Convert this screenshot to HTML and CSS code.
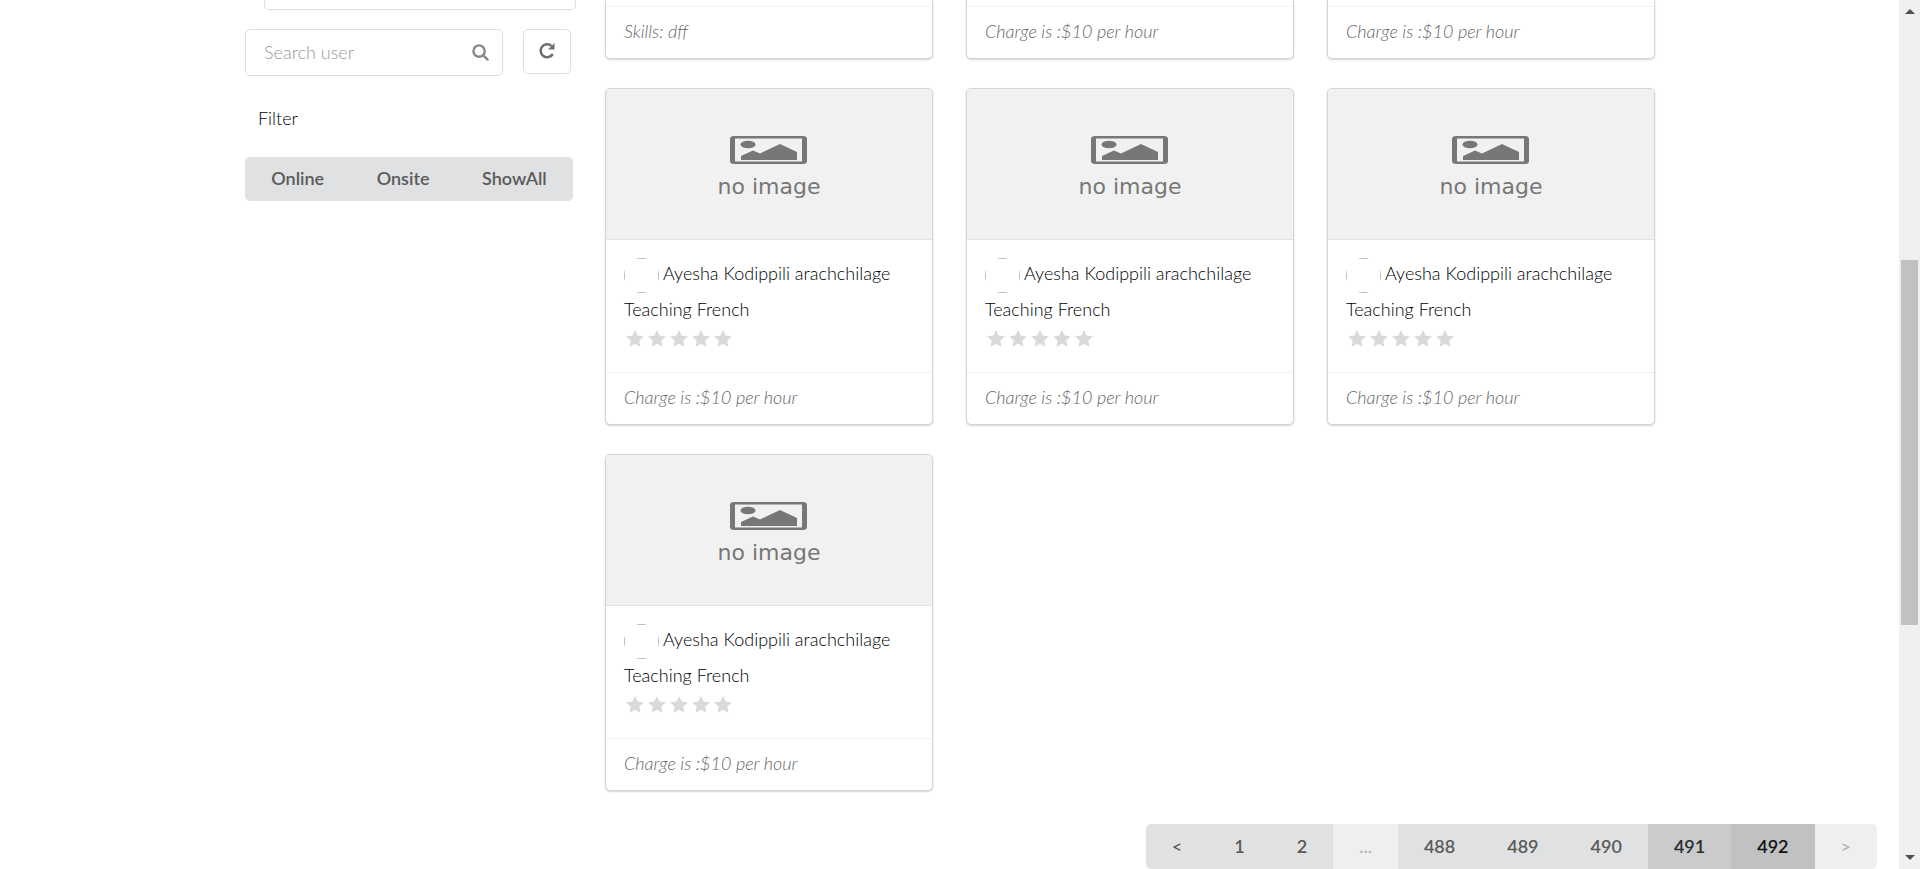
FILE: index.html
```html
<!DOCTYPE html>
<html lang="en">
<head>
<meta charset="utf-8">
<title>Users</title>
<link rel="stylesheet" href="styles.css">
</head>
<body>
<svg class="sprite" aria-hidden="true">
  <symbol id="star" viewBox="0 0 18 17"><path d="M9 0l2.600 5.600 6.200.8-4.500 4.200 1.100 6.100L9 13.700l-5.400 3 1.100-6.100L.2 6.400l6.200-.8z"/></symbol>
  <symbol id="picture" viewBox="0 0 78 28"><path fill-rule="evenodd" d="M4 0h69q4 0 4 3v22q0 3-4 3H4q-4 0-4-3V3q0-3 4-3zm1 2.500v23h67v-23z"/><ellipse cx="18" cy="8.500" rx="7.500" ry="3.800"/><path d="M11 24v-4l12-5.500 7 3L50 8l17 8v8z"/></symbol>
</svg>
<div class="window">
  <div class="page">
    <div class="container">
      <aside class="sidebar">
        <div class="panel"></div>
        <form class="search">
          <div class="search-box">
            <input class="search-input" type="text" placeholder="Search user" aria-label="Search user">
            <svg class="search-icon" viewBox="0 0 18 18" aria-hidden="true"><circle cx="7.500" cy="7.500" r="6"/><path d="M12 12l4.500 4.500"/></svg>
          </div>
          <button class="refresh" type="button" aria-label="Refresh"><svg class="refresh-icon" viewBox="0 0 18 18" aria-hidden="true"><path class="arc" d="M13.500 3.900A6.500 6.500 0 1 0 14.800 12"/><path class="head" d="M16.500 1v6.500H10z"/></svg></button>
        </form>
        <h2 class="filter-title">Filter</h2>
        <div class="filters">
          <button class="filter" type="button">Online</button>
          <button class="filter" type="button">Onsite</button>
          <button class="filter" type="button">ShowAll</button>
        </div>
      </aside>
      <main class="cards">
        <article class="card card-end"><p class="extra">Skills: dff</p></article>
        <article class="card card-end"><p class="extra">Charge is :$10 per hour</p></article>
        <article class="card card-end"><p class="extra">Charge is :$10 per hour</p></article>

        <article class="card">
          <div class="cover"><svg class="picture" aria-hidden="true"><use href="#picture"/></svg><span class="cover-text">no image</span></div>
          <div class="content">
            <div class="person"><span class="avatar"></span><span>Ayesha Kodippili arachchilage</span></div>
            <p class="subject">Teaching French</p>
            <div class="stars" role="img" aria-label="0 of 5 stars"><svg><use href="#star"/></svg><svg><use href="#star"/></svg><svg><use href="#star"/></svg><svg><use href="#star"/></svg><svg><use href="#star"/></svg></div>
          </div>
          <p class="extra">Charge is :$10 per hour</p>
        </article>
        <article class="card">
          <div class="cover"><svg class="picture" aria-hidden="true"><use href="#picture"/></svg><span class="cover-text">no image</span></div>
          <div class="content">
            <div class="person"><span class="avatar"></span><span>Ayesha Kodippili arachchilage</span></div>
            <p class="subject">Teaching French</p>
            <div class="stars" role="img" aria-label="0 of 5 stars"><svg><use href="#star"/></svg><svg><use href="#star"/></svg><svg><use href="#star"/></svg><svg><use href="#star"/></svg><svg><use href="#star"/></svg></div>
          </div>
          <p class="extra">Charge is :$10 per hour</p>
        </article>
        <article class="card">
          <div class="cover"><svg class="picture" aria-hidden="true"><use href="#picture"/></svg><span class="cover-text">no image</span></div>
          <div class="content">
            <div class="person"><span class="avatar"></span><span>Ayesha Kodippili arachchilage</span></div>
            <p class="subject">Teaching French</p>
            <div class="stars" role="img" aria-label="0 of 5 stars"><svg><use href="#star"/></svg><svg><use href="#star"/></svg><svg><use href="#star"/></svg><svg><use href="#star"/></svg><svg><use href="#star"/></svg></div>
          </div>
          <p class="extra">Charge is :$10 per hour</p>
        </article>
        <article class="card">
          <div class="cover"><svg class="picture" aria-hidden="true"><use href="#picture"/></svg><span class="cover-text">no image</span></div>
          <div class="content">
            <div class="person"><span class="avatar"></span><span>Ayesha Kodippili arachchilage</span></div>
            <p class="subject">Teaching French</p>
            <div class="stars" role="img" aria-label="0 of 5 stars"><svg><use href="#star"/></svg><svg><use href="#star"/></svg><svg><use href="#star"/></svg><svg><use href="#star"/></svg><svg><use href="#star"/></svg></div>
          </div>
          <p class="extra">Charge is :$10 per hour</p>
        </article>
      </main>
    </div>
    <nav class="pagination" aria-label="Pages">
      <button class="page-item" type="button">&lt;</button>
      <button class="page-item" type="button">1</button>
      <button class="page-item" type="button">2</button>
      <button class="page-item disabled" type="button" disabled>...</button>
      <button class="page-item" type="button">488</button>
      <button class="page-item" type="button">489</button>
      <button class="page-item" type="button">490</button>
      <button class="page-item hovered" type="button">491</button>
      <button class="page-item current" type="button" aria-current="page">492</button>
      <button class="page-item disabled" type="button" disabled>&gt;</button>
    </nav>
  </div>
  <div class="scrollbar" aria-hidden="true">
    <svg class="scroll-arrow" viewBox="0 0 10 5"><path d="M0 5l5-5 5 5z"/></svg>
    <div class="track"><div class="thumb"></div></div>
    <svg class="scroll-arrow" viewBox="0 0 10 5"><path d="M0 0l5 5 5-5z"/></svg>
  </div>
</div>
</body>
</html>
```

FILE: styles.css
```css
*, *::before { box-sizing: border-box; }

body {
  margin: 0;
  background: #fff;
  color: #000;
  font: 300 18px/24px Lato, "Liberation Sans", sans-serif;
}

button, input { font: inherit; }
p, h2 { margin: 0; }
.sprite { position: absolute; width: 0; height: 0; }

.window { display: flex; min-height: 100vh; }
.page { flex: 1; min-width: 0; }

.container {
  display: grid;
  grid-template-columns: repeat(4, 1fr);
  column-gap: 33px;
  max-width: 1411px;
  margin: 0 auto;
}

/* Sidebar */
.sidebar { padding-left: 1px; margin-right: -1px; }
.panel {
  height: 10px;
  margin: 0 -3px 19px 19px;
  border: 1px solid #dededf;
  border-top: 0;
  border-radius: 0 0 5px 5px;
}
.search { display: flex; gap: 20px; align-items: flex-start; padding-right: 2px; }
.search-box { position: relative; flex: 1; }
.search-input {
  display: block;
  width: 100%;
  height: 47px;
  padding: 0 48px 2px 18px;
  border: 1px solid #dededf;
  border-radius: 5px;
  color: #212121;
  background: #fff;
}
.search-input::placeholder { color: #999; opacity: 1; }
.search-icon {
  position: absolute;
  top: 15px;
  right: 14px;
  width: 17px;
  height: 17px;
  fill: none;
  stroke: #888;
  stroke-width: 2.500;
  stroke-linecap: round;
}
.refresh {
  display: grid;
  place-items: center;
  width: 48px;
  height: 45px;
  padding: 0 0 2px;
  border: 1px solid #dededf;
  border-radius: 5px;
  background: #fff;
}
.refresh-icon { width: 18px; height: 18px; }
.arc { fill: none; stroke: #6e6e6e; stroke-width: 2.500; }
.head { fill: #6e6e6e; }
.filter-title { margin: 30px 13px 27px; font-size: 18px; font-weight: inherit; }
.filters { display: flex; border-radius: 5px; overflow: hidden; background: #e0e1e2; }
.filter {
  flex: 1 1 auto;
  height: 44px;
  padding: 0 18px 2px;
  border: 0;
  background: none;
  color: #5a5a5a;
  font-weight: 600;
}

/* Cards */
.cards {
  grid-column: 2 / -1;
  display: grid;
  grid-template-columns: repeat(3, 1fr);
  gap: 29px 33px;
}
.card {
  border: 1px solid #d4d4d5;
  border-radius: 5px;
  box-shadow: 0 1px 2px #d4d4d5;
  overflow: hidden;
  background: #fff;
}
.card-end { padding-top: 6px; border-top: 0; border-radius: 0 0 5px 5px; }
.cover {
  display: flex;
  flex-direction: column;
  align-items: center;
  gap: 10px;
  height: 151px;
  padding-top: 47px;
  border-bottom: 1px solid #e2e2e2;
  background: #f1f1f1;
}
.picture { width: 78px; height: 28px; fill: #777; }
.cover-text { color: #777; font: 22px/26px "DejaVu Sans", sans-serif; }
.content { padding: 18px 18px 24px; }
.person { display: flex; gap: 4px; height: 39px; }
.person span:last-child { padding-top: 3px; }
.avatar { width: 35px; height: 35px; border-radius: 50%; overflow: hidden; }
.avatar::before { content: ""; display: block; height: 100%; border: 1px solid #b8b8b8; }
.subject { margin-bottom: 9px; }
.stars { display: flex; gap: 4px; height: 18px; padding-left: 2px; }
.stars svg { width: 18px; height: 17px; fill: #d9d9d9; }
.extra {
  padding: 12px 18px 15px;
  border-top: 1px solid #f1f1f1;
  color: #666;
  font-style: italic;
}

/* Pagination */
.pagination {
  display: flex;
  width: fit-content;
  margin: 33px 22px 0 auto;
  border-radius: 5px;
  overflow: hidden;
}
.page-item {
  height: 45px;
  padding: 0 26px 2px;
  border: 0;
  background: #e0e1e2;
  color: #5a5a5a;
  font-weight: 600;
}
.page-item.disabled { background: #efeff0; color: #b4b4b5; }
.page-item.hovered { background: #cacbcd; color: #2b2b2b; }
.page-item.current { background: #c0c1c2; color: #111; }

/* Scrollbar */
.scrollbar {
  display: flex;
  flex-direction: column;
  align-items: center;
  width: 21px;
  padding: 9px 0;
  background: #f0f0f0;
}
.scroll-arrow { width: 10px; height: 5px; fill: #505050; }
.track { flex: 1; display: grid; grid-template-rows: 246fr 365fr 230fr; width: 17px; }
.thumb { grid-row: 2; background: #c1c1c1; }
```
